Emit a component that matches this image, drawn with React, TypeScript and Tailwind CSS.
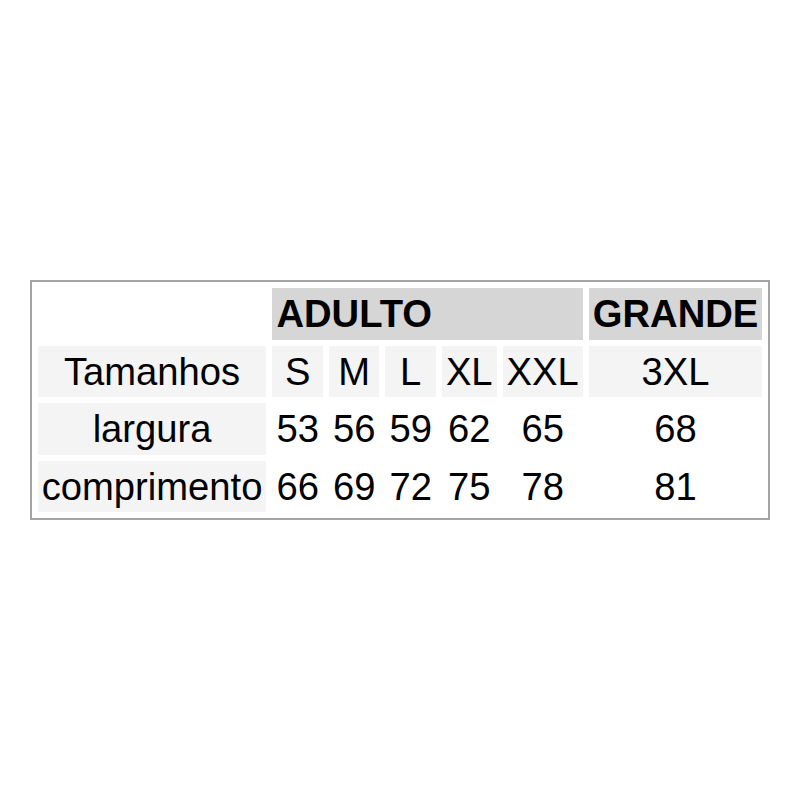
const sizes = ["S", "M", "L", "XL", "XXL"];

const rows = [
  { label: "largura", values: ["53", "56", "59", "62", "65"], big: "68" },
  { label: "comprimento", values: ["66", "69", "72", "75", "78"], big: "81" },
];

const App = () => {
  return (
    <div
      className="w-[800px] h-[800px] bg-white flex items-center justify-center text-black"
      style={{ fontFamily: '"Liberation Sans", Arial, sans-serif' }}
    >
      <table className="border-separate border-spacing-[6px] border-2 border-[#a3a3a3] text-[38.2px] leading-[43.5px]">
        <tbody>
          <tr>
            <td className="p-1"></td>
            <td colSpan={5} className="p-1 bg-[#d6d6d6] font-bold text-left">
              ADULTO
            </td>
            <td className="p-1 bg-[#d6d6d6] font-bold text-left">GRANDE</td>
          </tr>
          <tr>
            <td className="p-1 bg-[#f4f4f4] text-center">Tamanhos</td>
            {sizes.map((s) => (
              <td key={s} className="p-1 bg-[#f4f4f4] text-center">
                {s}
              </td>
            ))}
            <td className="p-1 bg-[#f4f4f4] text-center">3XL</td>
          </tr>
          {rows.map((row) => (
            <tr key={row.label}>
              <td className="p-1 bg-[#f4f4f4] text-center">{row.label}</td>
              {row.values.map((v, i) => (
                <td key={i} className="p-1 text-center">
                  {v}
                </td>
              ))}
              <td className="p-1 text-center">{row.big}</td>
            </tr>
          ))}
        </tbody>
      </table>
    </div>
  );
};

export default App;
